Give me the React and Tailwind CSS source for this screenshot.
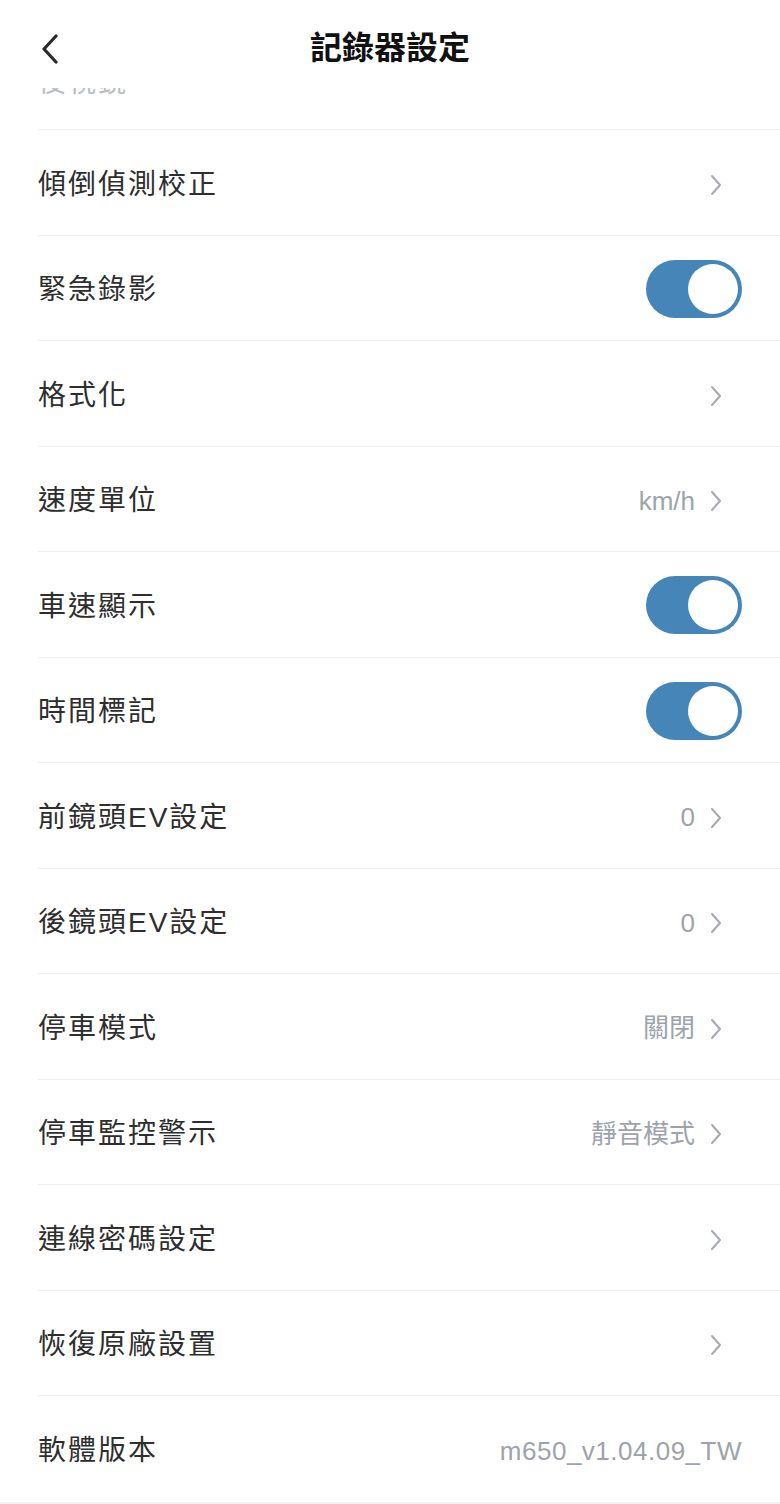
import React from 'react';

// rows of the recorder settings list
const rows = [
  { label: '傾倒偵測校正', type: 'link' },
  { label: '緊急錄影', type: 'toggle' },
  { label: '格式化', type: 'link' },
  { label: '速度單位', type: 'link', value: 'km/h' },
  { label: '車速顯示', type: 'toggle' },
  { label: '時間標記', type: 'toggle' },
  { label: '前鏡頭EV設定', type: 'link', value: '0' },
  { label: '後鏡頭EV設定', type: 'link', value: '0' },
  { label: '停車模式', type: 'link', value: '關閉' },
  { label: '停車監控警示', type: 'link', value: '靜音模式' },
  { label: '連線密碼設定', type: 'link' },
  { label: '恢復原廠設置', type: 'link' },
  { label: '軟體版本', type: 'text', value: 'm650_v1.04.09_TW' },
];

const font = { fontFamily: '"Liberation Sans", "Noto Sans CJK TC", sans-serif' };

function Chevron() {
  return (
    <svg width="12" height="22" viewBox="0 0 12 22" className="shrink-0">
      <path d="M2 2 L10 11 L2 20" fill="none" stroke="#a6a9ae" strokeWidth="2" strokeLinecap="round" strokeLinejoin="round" />
    </svg>
  );
}

function Toggle() {
  return (
    <div className="w-[96px] h-[58px] mt-[2px] rounded-full bg-[#4585b8] p-[4px] flex justify-end">
      <div className="w-[50px] h-[50px] rounded-full bg-white" />
    </div>
  );
}

function Row({ row, last }) {
  return (
    <div className={`ml-[38px] h-[105.5px] pr-[38px] flex items-center justify-between ${last ? '' : 'border-b border-[#eeeeef]'}`}>
      <span className="mt-[5px] text-[28px] text-[#2e2e2e] tracking-[2px]">{row.label}</span>
      {row.type === 'toggle' && <Toggle />}
      {row.type === 'link' && (
        <div className="mt-[5px] flex items-center gap-[15px] mr-[20px]">
          {row.value && <span className="text-[26px] text-[#9ea3ab]">{row.value}</span>}
          <Chevron />
        </div>
      )}
      {row.type === 'text' && <span className="mt-[5px] text-[26px] text-[#9ea3ab] tracking-[0.5px]">{row.value}</span>}
    </div>
  );
}

export default function App() {
  return (
    <div className="min-h-screen bg-[#f1f1f3]" style={font}>
      <div className="bg-white">
        {/* Header */}
        <div className="relative z-10 h-[88px] bg-white flex items-start justify-center pt-[28px]">
          <svg width="22" height="30" viewBox="0 0 22 30" className="absolute left-[38px] top-[34px]">
            <path d="M18 2 L6 15 L18 28" fill="none" stroke="#2a2a2a" strokeWidth="3.2" strokeLinecap="round" strokeLinejoin="round" />
          </svg>
          <h1 className="text-[32px] leading-[40px] font-bold text-[#111]">記錄器設定</h1>
        </div>

        {/* row scrolled under the header */}
        <div className="ml-[38px] h-[42px] overflow-hidden border-b border-[#eeeeef]">
          <div className="-mt-[24px] text-[28px] leading-[38px] tracking-[2px] text-[#b9bdc4]">後視鏡</div>
        </div>

        {rows.map((r, i) => (
          <Row key={r.label} row={r} last={i === rows.length - 1} />
        ))}
      </div>
    </div>
  );
}
